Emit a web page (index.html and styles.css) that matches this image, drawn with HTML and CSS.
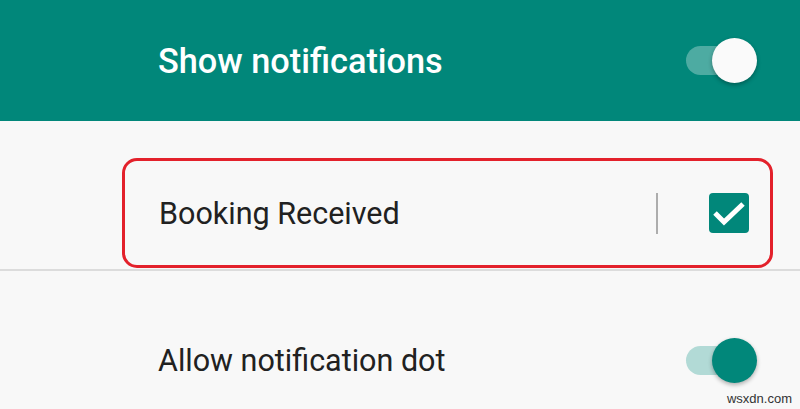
FILE: index.html
```html
<!DOCTYPE html>
<html>
<head>
  <title>Notification settings</title>
  <link rel="stylesheet" href="styles.css">
</head>
<body>
  <div class="header">
    <div class="header-title">Show notifications</div>
    <div class="toggle toggle-light">
      <div class="track"></div>
      <div class="thumb"></div>
    </div>
  </div>

  <div class="section">
    <div class="highlight-row">
      <div class="row-label">Booking Received</div>
      <div class="row-divider"></div>
      <div class="checkbox">
        <svg viewBox="0 0 40 40" width="40" height="40">
          <polyline points="6,20 15,29 34,11" fill="none" stroke="#fff" stroke-width="5" />
        </svg>
      </div>
    </div>
  </div>

  <div class="divider"></div>

  <div class="row">
    <div class="row-label">Allow notification dot</div>
    <div class="toggle toggle-on">
      <div class="track"></div>
      <div class="thumb"></div>
    </div>
  </div>

  <div class="watermark">wsxdn.com</div>
</body>
</html>
```

FILE: styles.css
```css
* {
  margin: 0;
  padding: 0;
  box-sizing: border-box;
}

body {
  width: 800px;
  height: 409px;
  font-family: Roboto, 'Noto Sans', sans-serif;
  background: #f8f8f8;
  color: #212121;
  overflow: hidden;
  position: relative;
}

.header {
  height: 121px;
  background: #01877a;
  display: flex;
  align-items: center;
  justify-content: space-between;
  padding: 0 43px 0 158px;
}

.header-title {
  color: #fff;
  font-size: 34.3px;
  font-weight: 500;
}

.toggle {
  position: relative;
  width: 71px;
  height: 45px;
}

.toggle .track {
  position: absolute;
  left: 0;
  top: 8px;
  width: 64px;
  height: 29px;
  border-radius: 15px;
}

.toggle .thumb {
  position: absolute;
  right: 0;
  top: 0;
  width: 45px;
  height: 45px;
  border-radius: 50%;
  box-shadow: 0 2px 4px rgba(0, 0, 0, 0.3);
}

.toggle-light .track {
  background: rgba(255, 255, 255, 0.3);
}

.toggle-light .thumb {
  background: #fafafa;
}

.toggle-on .track {
  background: #b2dad6;
}

.toggle-on .thumb {
  background: #01877a;
}

.section {
  padding: 37px 27px 0 122px;
  height: 148px;
}

.highlight-row {
  height: 110px;
  border: 3px solid #e3212b;
  border-radius: 15px;
  display: flex;
  align-items: center;
  padding: 0 21px 0 34px;
}

.row-label {
  font-size: 30.5px;
  flex: 1;
}

.row-divider {
  width: 2px;
  height: 41px;
  background: #adadad;
  margin-right: 51px;
}

.checkbox {
  width: 40px;
  height: 40px;
  border-radius: 4px;
  background: #01877a;
}

.checkbox svg {
  display: block;
}

.divider {
  height: 2px;
  background: #dcdcdc;
}

.row {
  height: 138px;
  display: flex;
  align-items: center;
  padding: 40px 43px 0 158px;
}

.watermark {
  position: absolute;
  right: 8px;
  bottom: 3px;
  font-family: 'Liberation Sans', Arial, sans-serif;
  font-size: 13px;
  color: #333;
}
```
